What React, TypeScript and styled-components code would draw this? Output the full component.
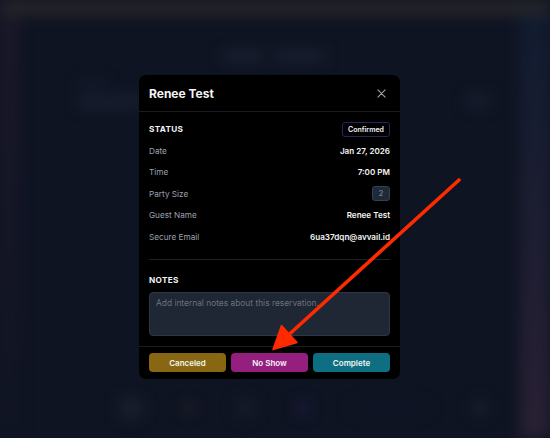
import React from "react";
import styled, { createGlobalStyle } from "styled-components";

const Global = createGlobalStyle`
  html, body { margin: 0; padding: 0; background: #0f1423; }
  body { font-family: Inter, "Noto Sans", sans-serif; -webkit-font-smoothing: antialiased; }
  * { box-sizing: border-box; }
`;

const Page = styled.div`
  position: relative;
  width: 550px;
  height: 438px;
  overflow: hidden;
  background: #0f1423;
`;

/* ---------- blurred page behind the dialog ---------- */
const Backdrop = styled.div`
  display: flex;
  flex-direction: column;
  height: 100%;
  filter: blur(7px);
`;

const TopBar = styled.div`
  height: 15px;
  background: #262629;
  flex-shrink: 0;
`;

const BackBody = styled.div`
  flex: 1;
  display: flex;
`;

const SideStrip = styled.div<{ $w: number; $top: string; $bottom: string }>`
  width: ${(p) => p.$w}px;
  background: linear-gradient(180deg, ${(p) => p.$top}, ${(p) => p.$bottom});
  flex-shrink: 0;
`;

const BackMain = styled.div`
  flex: 1;
  display: flex;
  flex-direction: column;
  padding: 36px 30px 0 40px;
`;

const BackTitle = styled.div`
  display: flex;
  justify-content: center;
  gap: 10px;
  height: 12px;
`;

const Blob = styled.div<{ $w: number; $h: number; $c: string; $r?: number }>`
  width: ${(p) => p.$w}px;
  height: ${(p) => p.$h}px;
  background: ${(p) => p.$c};
  border-radius: ${(p) => p.$r ?? 4}px;
  flex-shrink: 0;
`;

const BackRow = styled.div`
  display: flex;
  justify-content: space-between;
  align-items: flex-end;
  margin-top: 18px;
  padding-left: 20px;
`;

const BackCol = styled.div`
  display: flex;
  flex-direction: column;
  gap: 8px;
`;

const BackCards = styled.div`
  margin-top: auto;
  display: flex;
  gap: 40px;
  padding: 0 0 10px 60px;
  height: 50px;
  align-items: center;
`;

/* ---------- dialog ---------- */
const Overlay = styled.div`
  position: absolute;
  inset: 0;
  display: flex;
  align-items: flex-start;
  padding: 75px 0 0 139px;
`;

const Modal = styled.div`
  width: 261px;
  height: 304px;
  background: #000;
  border-radius: 7px;
  display: flex;
  flex-direction: column;
  overflow: hidden;
`;

const Header = styled.div`
  height: 37px;
  display: flex;
  align-items: center;
  justify-content: space-between;
  padding: 1px 14px 0 10px;
  border-bottom: 1px solid #1c1c20;
`;

const Title = styled.h2`
  margin: 0;
  font-size: 12px;
  font-weight: 700;
  color: #f5f5f5;
`;

const Close = styled.button`
  background: none;
  border: none;
  padding: 0;
  display: flex;
  color: #9ca3af;
  cursor: pointer;
`;

const Body = styled.div`
  padding: 6px 10px 0 10px;
  display: flex;
  flex-direction: column;
`;

const Row = styled.div<{ $h?: number }>`
  height: ${(p) => p.$h ?? 21.5}px;
  display: flex;
  align-items: center;
  justify-content: space-between;
`;

const SectionLabel = styled.div`
  font-size: 8.2px;
  font-weight: 700;
  color: #f3f4f6;
  letter-spacing: 0.3px;
  text-transform: uppercase;
`;

const Label = styled.span`
  font-size: 8.2px;
  color: #9ca3af;
`;

const Value = styled.span`
  font-size: 8.1px;
  font-weight: 600;
  color: #f5f5f5;
`;

const StatusBadge = styled.span`
  height: 15px;
  padding: 0 5px;
  display: inline-flex;
  align-items: center;
  border: 1px solid #28245e;
  border-radius: 3px;
  font-size: 7px;
  font-weight: 600;
  color: #f3f4f6;
`;

const CountBadge = styled.span`
  width: 18px;
  height: 15px;
  display: inline-flex;
  align-items: center;
  justify-content: center;
  background: #1f2937;
  border: 1px solid #334155;
  border-radius: 3px;
  font-size: 7.4px;
  color: #8b95a5;
`;

const Divider = styled.div`
  height: 1px;
  background: #1f2227;
  margin: 11px 0 0 0;
`;

const NotesLabel = styled(SectionLabel)`
  margin-top: 14px;
  line-height: 12px;
`;

const Notes = styled.textarea`
  margin-top: 6px;
  height: 44px;
  width: 100%;
  resize: none;
  background: #1e2733;
  border: 1px solid #2c3645;
  border-radius: 4px;
  padding: 5px 6px;
  font-family: Inter, "Noto Sans", sans-serif;
  font-size: 8.4px;
  color: #e5e7eb;
  outline: none;
  &::placeholder { color: #6b7280; }
`;

const Footer = styled.div`
  margin-top: auto;
  border-top: 1px solid #1c1c20;
  padding: 6px 10px 7px 10px;
  display: grid;
  grid-template-columns: 1fr 1fr 1fr;
  gap: 5px;
`;

const ActionButton = styled.button<{ $bg: string }>`
  height: 19px;
  border: none;
  border-radius: 4px;
  background: ${(p) => p.$bg};
  color: #f5f5f5;
  font-family: Inter, "Noto Sans", sans-serif;
  font-size: 8px;
  font-weight: 600;
  cursor: pointer;
`;

const Annotation = styled.svg`
  position: absolute;
  inset: 0;
  pointer-events: none;
`;

const rows: [string, React.ReactNode][] = [
  ["Date", <Value>Jan 27, 2026</Value>],
  ["Time", <Value>7:00 PM</Value>],
  ["Party Size", <CountBadge>2</CountBadge>],
  ["Guest Name", <Value>Renee Test</Value>],
  ["Secure Email", <Value>6ua37dqn@avvail.id</Value>],
];

export default function App() {
  return (
    <Page>
      <Global />
      <Backdrop>
        <TopBar />
        <BackBody>
          <SideStrip $w={18} $top="#1c1829" $bottom="#101523" />
          <BackMain>
            <BackTitle>
              <Blob $w={40} $h={10} $c="#1d2232" />
              <Blob $w={52} $h={10} $c="#1c2131" />
            </BackTitle>
            <BackRow>
              <BackCol>
                <Blob $w={30} $h={7} $c="#161c2b" />
                <Blob $w={66} $h={12} $c="#191f2f" />
              </BackCol>
              <Blob $w={24} $h={14} $c="#181d2d" />
            </BackRow>
            <BackCards>
              <Blob $w={26} $h={26} $c="#181e2c" $r={13} />
              <Blob $w={10} $h={10} $c="#2a2225" $r={5} />
              <Blob $w={22} $h={22} $c="#151a29" $r={11} />
              <Blob $w={14} $h={14} $c="#1b1a3c" $r={7} />
              <Blob $w={80} $h={10} $c="#0f1423" $r={5} />
              <Blob $w={20} $h={20} $c="#161c29" $r={10} />
            </BackCards>
          </BackMain>
          <SideStrip $w={30} $top="#111c30" $bottom="#2a2034" />
        </BackBody>
      </Backdrop>

      <Overlay>
        <Modal>
          <Header>
            <Title>Renee Test</Title>
            <Close aria-label="Close">
              <svg width="9" height="9" viewBox="0 0 10 10" fill="none" stroke="currentColor" strokeWidth="1.2" strokeLinecap="round">
                <path d="M1 1L9 9M9 1L1 9" />
              </svg>
            </Close>
          </Header>
          <Body>
            <Row $h={22}>
              <SectionLabel>Status</SectionLabel>
              <StatusBadge>Confirmed</StatusBadge>
            </Row>
            {rows.map(([label, value]) => (
              <Row key={label}>
                <Label>{label}</Label>
                {value}
              </Row>
            ))}
            <Divider />
            <NotesLabel>Notes</NotesLabel>
            <Notes placeholder="Add internal notes about this reservation..." />
          </Body>
          <Footer>
            <ActionButton $bg="#876711">Canceled</ActionButton>
            <ActionButton $bg="#951f7e">No Show</ActionButton>
            <ActionButton $bg="#0e6f82">Complete</ActionButton>
          </Footer>
        </Modal>
      </Overlay>

      <Annotation width="550" height="438" viewBox="0 0 550 438">
        <line x1="459" y1="180" x2="289" y2="334.5" stroke="#ff2a00" strokeWidth="3.6" strokeLinecap="round" />
        <polygon points="273,349.5 281.5,325.5 297,342.5" fill="#ff2a00" stroke="#ff2a00" strokeWidth="1.5" strokeLinejoin="round" />
      </Annotation>
    </Page>
  );
}
